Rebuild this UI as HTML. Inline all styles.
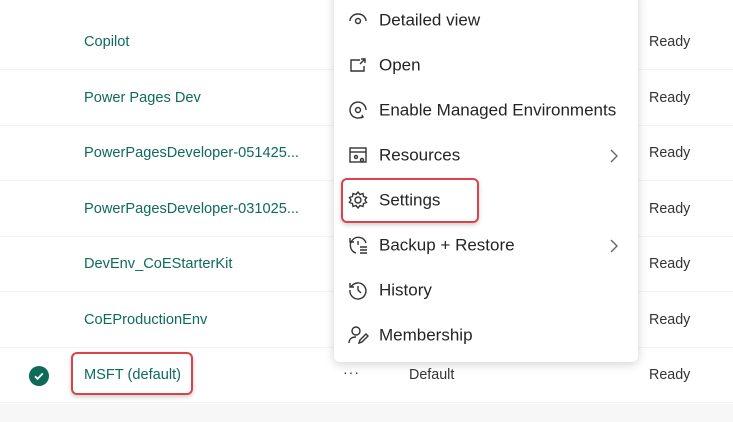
<!DOCTYPE html>
<html><head><meta charset="utf-8"><style>
*{margin:0;padding:0;box-sizing:border-box}
body{width:733px;height:422px;overflow:hidden;background:#fff;font-family:"Segoe UI","Liberation Sans",sans-serif;position:relative}
.row{position:absolute;left:0;width:733px;height:55px;border-bottom:1px solid #f3f3f3;background:#fff}
.name{position:absolute;left:84px;font-size:14.6px;color:#0e6b5a;top:50%;transform:translateY(-50%)}
.st{position:absolute;left:649px;font-size:14.3px;color:#333;top:50%;transform:translateY(-50%)}
.menu{position:absolute;left:334px;top:-10px;width:304px;height:372px;background:#fff;border-radius:6px;box-shadow:0 2px 10px rgba(0,0,0,.18)}
.it{position:absolute;left:0;width:304px;height:45px}
.it span{position:absolute;left:45px;top:50%;transform:translateY(-52%);font-size:17px;color:#242424}
.it svg{position:absolute;left:13px;top:11px;width:22px;height:22px;fill:none;stroke:#333;stroke-width:1.4}
.box{position:absolute;border:2px solid #d9434a;border-radius:6px;box-shadow:0 2px 4px rgba(0,0,0,.2)}
</style></head><body>
<div class="row" style="top:15px"><div class="name">Copilot</div><div class="st">Ready</div></div>
<div class="row" style="top:71px"><div class="name">Power Pages Dev</div><div class="st">Ready</div></div>
<div class="row" style="top:126px"><div class="name">PowerPagesDeveloper-051425...</div><div class="st">Ready</div></div>
<div class="row" style="top:182px"><div class="name">PowerPagesDeveloper-031025...</div><div class="st">Ready</div></div>
<div class="row" style="top:237px"><div class="name">DevEnv_CoEStarterKit</div><div class="st">Ready</div></div>
<div class="row" style="top:293px"><div class="name">CoEProductionEnv</div><div class="st">Ready</div></div>
<div class="row" style="top:348px"><div class="name">MSFT (default)</div><div class="st">Ready</div>
<div style="position:absolute;left:409px;top:50%;transform:translateY(-50%);font-size:14.3px;color:#333">Default</div>
<div style="position:absolute;left:343px;top:16px;font-size:14px;color:#333;letter-spacing:1px">···</div>
<svg style="position:absolute;left:29px;top:18px" width="20" height="20" viewBox="0 0 20 20"><circle cx="10" cy="10" r="10" fill="#0e6b5a"/><path d="M6 10.3l2.6 2.5 5.2-5.4" stroke="#fff" stroke-width="1.8" fill="none"/></svg>
</div>
<div style="position:absolute;left:0;top:404px;width:733px;height:18px;background:#f7f7f7"></div>
<div class="box" style="left:71px;top:352px;width:122px;height:43px"></div>

<div class="menu">
<div class="it" style="top:8px"><svg viewBox="0 0 22 22"><path d="M3 12a8 7 0 0 1 16 0"/><circle cx="11" cy="12" r="2.5"/></svg><span>Detailed view</span></div>
<div class="it" style="top:53px"><svg viewBox="0 0 22 22"><path d="M13 6H4v11h13v-5"/><path d="M14 5h4v4M18 5l-5 5"/></svg><span>Open</span></div>
<div class="it" style="top:98px"><svg viewBox="0 0 22 22"><path d="M15 18A8 8 0 1 1 19 11"/><circle cx="11" cy="11" r="2.5"/><path d="M14 19l2-1-1-2"/></svg><span>Enable Managed Environments</span></div>
<div class="it" style="top:143px"><svg viewBox="0 0 22 22"><rect x="3" y="4" width="16" height="14"/><path d="M3 8h16"/><circle cx="9" cy="13" r="1.5"/><circle cx="15" cy="16" r="1.5"/></svg><span>Resources</span><svg viewBox="0 0 10 16" style="left:275px;top:15px;width:10px;height:16px;stroke:#666"><path d="M2 2l6 6-6 6"/></svg></div>
<div class="it" style="top:188px"><svg viewBox="0 0 22 22"><circle cx="11" cy="11" r="3"/><path d="M11 3l2 2.5 3-1 .5 3 3 1-1.5 2.5 1.5 2.5-3 1-.5 3-3-1-2 2.5-2-2.5-3 1-.5-3-3-1L4 11 2.5 8.5l3-1 .5-3 3 1z"/></svg><span>Settings</span></div>
<div class="it" style="top:233px"><svg viewBox="0 0 22 22"><path d="M9 19A8 8 0 1 1 19 9"/><path d="M3 4v4h4"/><path d="M11 7v4M13 13h7M13 16h7M13 19h7"/></svg><span>Backup + Restore</span><svg viewBox="0 0 10 16" style="left:275px;top:15px;width:10px;height:16px;stroke:#666"><path d="M2 2l6 6-6 6"/></svg></div>
<div class="it" style="top:278px"><svg viewBox="0 0 22 22"><path d="M4 8A8 8 0 1 1 3 11"/><path d="M3 4v4h4"/><path d="M11 7v4l3 3"/></svg><span>History</span></div>
<div class="it" style="top:323px"><svg viewBox="0 0 22 22"><circle cx="9" cy="7" r="4"/><path d="M2 19c0-4 3-6 7-6"/><path d="M12 19l1-3 6-6 2 2-6 6z"/></svg><span>Membership</span></div>
</div>
<div class="box" style="left:341px;top:178px;width:138px;height:45px"></div>
</body></html>
